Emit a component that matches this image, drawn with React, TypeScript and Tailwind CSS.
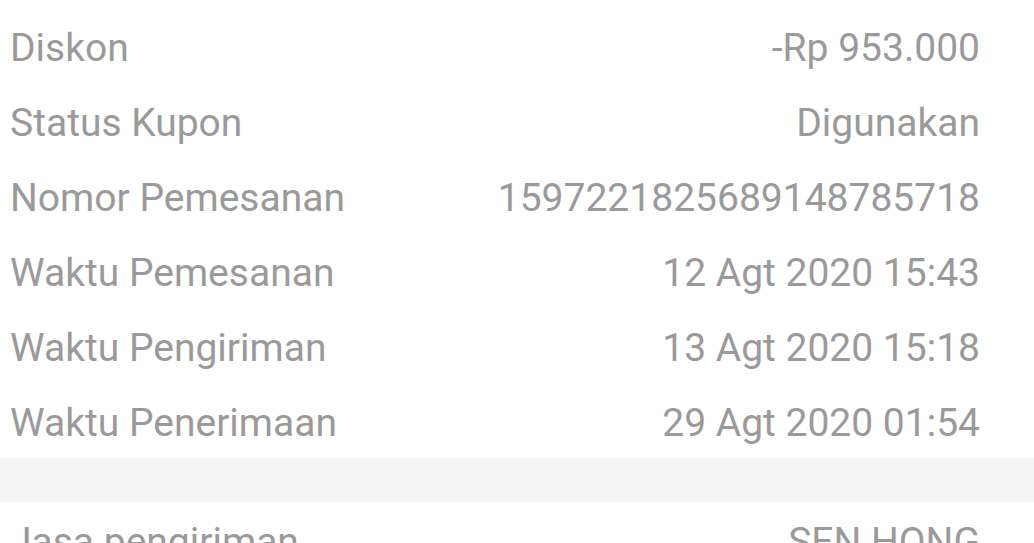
import React from "react";

const rows: [string, string][] = [
  ["Diskon", "-Rp 953.000"],
  ["Status Kupon", "Digunakan"],
  ["Nomor Pemesanan", "1597221825689148785718"],
  ["Waktu Pemesanan", "12 Agt 2020 15:43"],
  ["Waktu Pengiriman", "13 Agt 2020 15:18"],
  ["Waktu Penerimaan", "29 Agt 2020 01:54"],
];

function Row({ label, value }: { label: string; value: string }) {
  return (
    <div className="flex h-[75px] items-center justify-between pl-[10px] pr-[54px] pt-[6px] leading-[75px]">
      <span>{label}</span>
      <span>{value}</span>
    </div>
  );
}

export default function App() {
  return (
    <div
      className="h-[543px] w-[1034px] overflow-hidden bg-white pt-[8px] text-[39px] text-[#9a9a9a]"
      style={{ fontFamily: "Roboto, 'Noto Sans', sans-serif" }}
    >
      {rows.map(([l, v]) => (
        <Row key={l} label={l} value={v} />
      ))}
      <div className="h-[44px] bg-[#f4f4f4]" />
      <Row label="Jasa pengiriman" value="SEN HONG" />
    </div>
  );
}
